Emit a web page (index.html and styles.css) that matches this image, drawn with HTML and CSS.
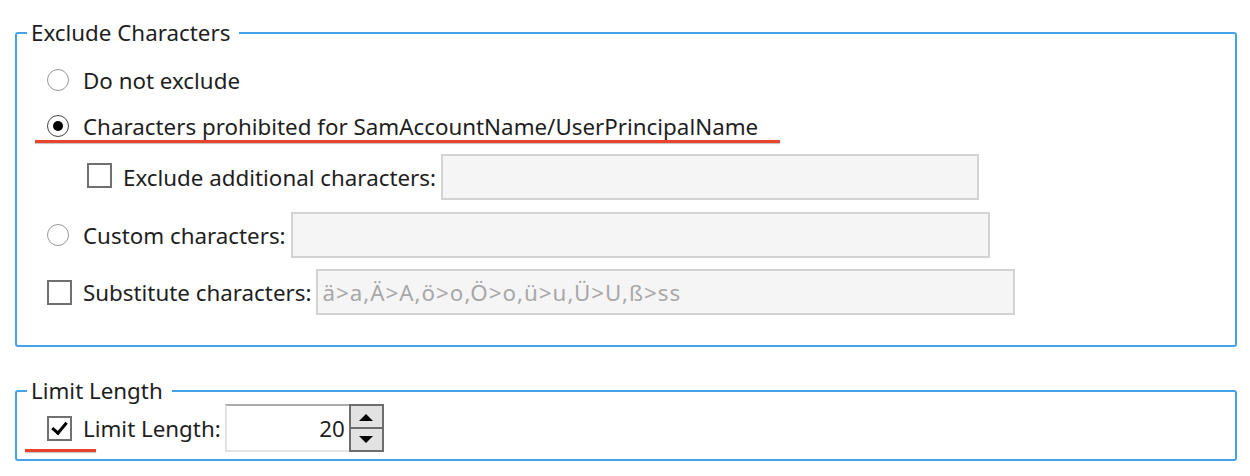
FILE: index.html
```html
<!DOCTYPE html>
<html>
<head>
<meta charset="utf-8">
<link rel="stylesheet" href="styles.css">
</head>
<body>
<fieldset class="group group-exclude">
  <legend>Exclude Characters</legend>
  <div class="row row-1">
    <input type="radio" name="ex" class="radio">
    <span class="label">Do not exclude</span>
  </div>
  <div class="row row-2">
    <input type="radio" name="ex" class="radio" checked>
    <span class="label">Characters prohibited for SamAccountName/UserPrincipalName</span>
    <span class="mark mark-prohibited"></span>
  </div>
  <div class="row row-3">
    <input type="checkbox" class="check">
    <span class="label">Exclude additional characters:</span>
    <input type="text" class="field field-additional">
  </div>
  <div class="row row-4">
    <input type="radio" name="ex" class="radio">
    <span class="label">Custom characters:</span>
    <input type="text" class="field field-custom">
  </div>
  <div class="row row-5">
    <input type="checkbox" class="check">
    <span class="label">Substitute characters:</span>
    <input type="text" class="field field-subst" placeholder="ä>a,Ä>A,ö>o,Ö>o,ü>u,Ü>U,ß>ss">
  </div>
</fieldset>

<fieldset class="group group-limit">
  <legend>Limit Length</legend>
  <div class="row row-limit">
    <input type="checkbox" class="check" checked>
    <span class="label">Limit Length:</span>
    <div class="spin">
      <input type="text" class="spin-input" value="20">
      <div class="spin-buttons">
        <button class="spin-btn"><svg width="14" height="8" viewBox="0 0 14 8"><path d="M0 8 L7 1 L14 8 Z" fill="#000"/></svg></button>
        <button class="spin-btn"><svg width="14" height="8" viewBox="0 0 14 8"><path d="M0 0 L7 7 L14 0 Z" fill="#000"/></svg></button>
      </div>
    </div>
    <span class="mark mark-limit"></span>
  </div>
</fieldset>
</body>
</html>
```
FILE: styles.css
```css
html, body {
  margin: 0;
  padding: 0;
  background: #ffffff;
}
body {
  font-family: "Noto Sans", "Open Sans", sans-serif;
  font-size: 22.35px;
  color: #1e1e1e;
  padding-top: 20px;
}
.group {
  box-sizing: border-box;
  width: 1222px;
  min-width: 0;
  margin: 0 0 0 15px;
  padding: 0;
  border: 2px solid #46a2e8;
  border-radius: 3px;
}
.group legend {
  margin-left: 10px;
  padding: 0 9px 0 4px;
  height: 26px;
  line-height: 26px;
}
.group-exclude {
  height: 327px;
}
.group-limit {
  margin-top: 31px;
  height: 83px;
}
.row {
  position: relative;
  display: flex;
  align-items: center;
  padding-left: 30px;
  height: 46px;
}
.row-1 { margin-top: 11px; }
.row-3 { margin-top: 5px; padding-left: 70px; }
.row-4 { margin-top: 12px; }
.row-5 { margin-top: 11px; }
.row-limit { height: 48px; }

.radio {
  appearance: none;
  -webkit-appearance: none;
  box-sizing: border-box;
  width: 22px;
  height: 22px;
  margin: 0 14px 0 0;
  border: 1.5px solid #999999;
  border-radius: 50%;
  background: #fff;
  flex: none;
  position: relative;
}
.radio:checked {
  border-color: #444;
}
.radio:checked::after {
  content: "";
  position: absolute;
  left: 4.5px;
  top: 4.5px;
  width: 10px;
  height: 10px;
  border-radius: 50%;
  background: #000;
}
.check {
  appearance: none;
  -webkit-appearance: none;
  box-sizing: border-box;
  width: 25px;
  height: 25px;
  margin: 0 11px 0 0;
  border: 2px solid #707070;
  background: #fff;
  flex: none;
  position: relative;
}
.row-3 .check { margin-top: -3px; }
.check:checked::after {
  content: "";
  position: absolute;
  left: 6px;
  top: 1px;
  width: 6px;
  height: 12px;
  border-right: 3px solid #000;
  border-bottom: 3px solid #000;
  transform: rotate(40deg);
}
.label {
  white-space: nowrap;
}
.field {
  box-sizing: border-box;
  height: 46px;
  border: 2px solid #d3d3d3;
  background: #f5f5f5;
  margin: 0 0 0 5px;
  padding: 0 4px;
  font: inherit;
  color: #1e1e1e;
  outline: none;
}
.field::placeholder {
  color: #a8a8a8;
  opacity: 1;
  letter-spacing: 1px;
}
.field-additional { width: 538px; }
.field-custom { width: 699px; }
.field-subst { width: 699px; }

.spin {
  display: flex;
  margin-left: 4px;
  height: 48px;
}
.spin-input {
  box-sizing: border-box;
  width: 124px;
  height: 48px;
  border: 0;
  border-top: 2px solid #acacac;
  border-left: 2px solid #e3e3e3;
  border-bottom: 2px solid #e3e3e3;
  background: #fff;
  font: inherit;
  color: #1e1e1e;
  text-align: right;
  padding: 0 4px 0 0;
  outline: none;
}
.spin-buttons {
  display: flex;
  flex-direction: column;
  width: 35px;
  height: 48px;
}
.spin-btn {
  box-sizing: border-box;
  flex: 1;
  margin: 0;
  padding: 0;
  border: 2px solid #6d6d6d;
  background: #e2e2e2;
  display: flex;
  align-items: center;
  justify-content: center;
}
.spin-btn + .spin-btn {
  border-top-width: 1px;
}
.spin-btn:first-child {
  border-bottom-width: 1px;
}
.mark {
  position: absolute;
  height: 3px;
  background: #e8432b;
  box-shadow: 0 1px 1px rgba(0,0,0,0.25);
}
.mark-prohibited {
  left: 18px;
  top: 37px;
  width: 745px;
}
.mark-limit {
  left: 8px;
  top: 45px;
  width: 71px;
}
```
